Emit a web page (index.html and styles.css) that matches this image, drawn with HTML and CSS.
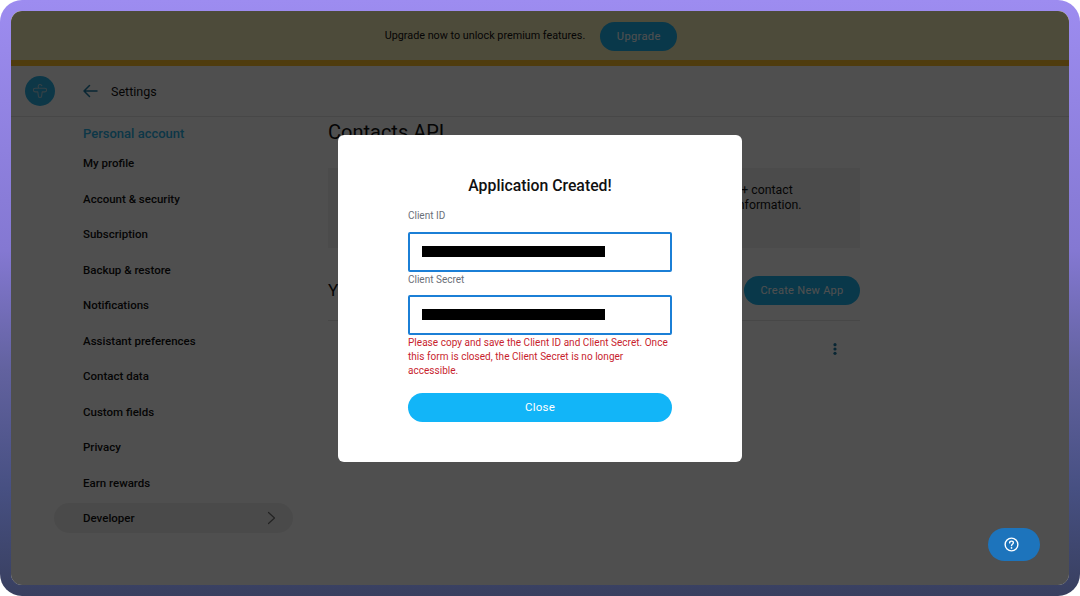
FILE: index.html
```html
<!DOCTYPE html>
<html lang="en">
<head>
<meta charset="utf-8">
<title>Settings</title>
<link rel="stylesheet" href="styles.css">
</head>
<body>
<div class="shell">
  <div class="frame">
    <div class="banner">
      <span>Upgrade now to unlock premium features.</span>
      <button class="pill banner-btn">Upgrade</button>
    </div>
    <header class="topbar">
      <div class="logo">
        <svg width="14" height="15" viewBox="0 0 14 15" fill="none" stroke="#a9cfdf" stroke-width="1.100" stroke-linejoin="round" stroke-linecap="round"><path d="M8.800 1.600C8.300.8 7.600.5 7 .5 5.900.5 5.200 1.400 5.200 2.400c0 .8.300 1.300.8 1.800M5.600 4.200H2.300C1.100 4.200.4 5 .4 6s.8 1.900 1.900 1.900h2.500l.6 4.200c.1.9.8 1.400 1.600 1.400s1.500-.5 1.600-1.400l.6-4.200h2.500c1.100 0 1.900-.9 1.900-1.900s-.7-1.800-1.900-1.800H7"/></svg>
      </div>
      <svg class="back" width="15" height="14" viewBox="0 0 15 14" fill="none" stroke="#1f7ca6" stroke-width="1.500" stroke-linecap="round" stroke-linejoin="round"><path d="M14 7H1M6.500 1.500 1 7l5.500 5.500"/></svg>
      <span class="title">Settings</span>
    </header>
    <div class="main">
      <nav class="sidebar">
        <div class="nav-head">Personal account</div>
        <a class="nav-item">My profile</a>
        <a class="nav-item">Account &amp; security</a>
        <a class="nav-item">Subscription</a>
        <a class="nav-item">Backup &amp; restore</a>
        <a class="nav-item">Notifications</a>
        <a class="nav-item">Assistant preferences</a>
        <a class="nav-item">Contact data</a>
        <a class="nav-item">Custom fields</a>
        <a class="nav-item">Privacy</a>
        <a class="nav-item">Earn rewards</a>
        <a class="nav-item active">Developer
          <svg width="9" height="14" viewBox="0 0 9 14" fill="none" stroke="#6f6f6f" stroke-width="1.200" stroke-linecap="round" stroke-linejoin="round"><path d="M1.500 1.500 7.500 7l-6 5.500"/></svg>
        </a>
      </nav>
      <section class="content">
        <h1>Contacts API</h1>
        <div class="info">
          <p>The Contacts API lets all developers access and manage their Contacts+ contact</p>
          <p>data with applications that read, create, and update all of your contact information.</p>
        </div>
        <div class="apps-head">
          <h2>Your Apps</h2>
          <button class="pill create-btn">Create New App</button>
        </div>
        <div class="app-row">
          <svg width="4" height="12" viewBox="0 0 4 12" fill="#1f7ca6"><circle cx="2" cy="1.700" r="1.600"/><circle cx="2" cy="6" r="1.600"/><circle cx="2" cy="10.300" r="1.600"/></svg>
        </div>
      </section>
    </div>
    <div class="overlay">
      <div class="modal">
        <h3>Application Created!</h3>
        <label class="field-label first">Client ID</label>
        <div class="field"><span class="redact"></span></div>
        <label class="field-label">Client Secret</label>
        <div class="field"><span class="redact"></span></div>
        <p class="warning">Please copy and save the Client ID and Client Secret. Once this form is closed, the Client Secret is no longer accessible.</p>
        <button class="pill close-btn">Close</button>
      </div>
    </div>
    <button class="help" aria-label="Help">
      <svg width="15" height="15" viewBox="0 0 16 16" fill="none" stroke="#fff" stroke-width="1.500" stroke-linecap="round"><circle cx="8" cy="8" r="6.800"/><path d="M6 6.300C6 5.100 6.900 4.400 8 4.400s2 .7 2 1.800c0 1.600-2 1.500-2 3"/><path d="M8 11.500v.1" stroke-width="1.800"/></svg>
    </button>
  </div>
</div>
</body>
</html>
```

FILE: styles.css
```css
* { box-sizing: border-box; }
html, body { margin: 0; height: 100%; }
body {
  background: #fff;
  font-family: Roboto, "Liberation Sans", sans-serif;
  overflow: hidden;
}
button { font-family: inherit; border: 0; padding: 0; }
h1, h2, h3, p { margin: 0; font-weight: 400; }

.shell {
  width: 1080px;
  height: 596px;
  padding: 11px;
  border-radius: 22px;
  background: linear-gradient(180deg, #9d8cf0 0%, #8478d2 42%, #62629f 62%, #475082 82%, #383f5f 100%);
}
.frame {
  position: relative;
  height: 574px;
  border-radius: 11px;
  overflow: hidden;
  background: #fff;
  display: flex;
  flex-direction: column;
}
.pill { border-radius: 999px; color: #fff; }

.banner {
  height: 55px;
  flex: none;
  display: flex;
  align-items: center;
  justify-content: center;
  gap: 15px;
  padding: 0 18px 0 0;
  background: #f9f0bc;
  border-bottom: 6px solid #fdc22d;
  font-size: 10.800px;
  color: #111;
}
.banner-btn {
  width: 77px;
  height: 29px;
  margin-top: 1px;
  background: #1eb4ee;
  font-size: 11.200px;
  letter-spacing: .3px;
}

.topbar {
  height: 51px;
  flex: none;
  display: flex;
  align-items: center;
  padding-left: 14px;
  border-bottom: 1px solid #e6e6e6;
}
.logo {
  width: 30px;
  height: 30px;
  border-radius: 50%;
  background: #2ab1e6;
  display: flex;
  align-items: center;
  justify-content: center;
  padding-top: 1px;
  margin-right: 28px;
}
.back { margin-right: 13px; }
.title { font-size: 12.500px; color: #111; }

.main { flex: 1; display: flex; min-height: 0; }
.sidebar {
  width: 317px;
  flex: none;
  padding: 7.500px 0 0 43px;
}
.nav-head {
  font-size: 13px;
  font-weight: 500;
  color: #2ab1e6;
  height: 18px;
  line-height: 18px;
  margin: 0 0 3px 29px;
}
.nav-item {
  display: flex;
  align-items: center;
  justify-content: space-between;
  height: 35.500px;
  width: 239px;
  padding: 0 17px 0 29px;
  font-size: 11.500px;
  font-weight: 500;
  color: #111;
}
.nav-item.active {
  height: 30px;
  margin-top: 2.500px;
  border-radius: 15px;
  background: #efefef;
}

.content { width: 532px; flex: none; }
h1 { font-size: 20px; color: #111; line-height: 24px; margin-top: 3px; }
.info {
  height: 80px;
  margin-top: 24px;
  padding: 15px 0 0 24px;
  background: #f2f2f2;
  font-size: 12.300px;
  line-height: 15px;
  color: #111;
  white-space: nowrap;
}
.apps-head {
  display: flex;
  align-items: center;
  justify-content: space-between;
  height: 29px;
  margin-top: 28px;
}
h2 { font-size: 17px; color: #111; margin-top: -2px; }
.create-btn {
  width: 116px;
  height: 29px;
  background: #1eb4ee;
  font-size: 11px;
  letter-spacing: .3px;
}
.app-row {
  height: 58px;
  margin-top: 15px;
  border-top: 1px solid #e6e6e6;
  display: flex;
  justify-content: flex-end;
  padding: 22px 23px 0 0;
}

.overlay {
  position: absolute;
  inset: 0;
  background: rgba(0, 0, 0, .69);
  display: flex;
  align-items: center;
  justify-content: center;
}
.modal {
  width: 404px;
  height: 327px;
  background: #fff;
  border-radius: 6px;
  padding: 42px 70px 0;
  display: flex;
  flex-direction: column;
}
h3 {
  font-size: 15.800px;
  font-weight: 500;
  color: #111;
  text-align: center;
  line-height: 19px;
  margin-top: -1px;
}
.field-label {
  font-size: 10px;
  color: #6b7078;
  line-height: 14px;
  margin-top: 1px;
  margin-bottom: 8px;
}
.field-label.first { margin-top: 14px; margin-bottom: 9px; }
.field {
  height: 40px;
  border: 2px solid #1b7fd6;
  border-radius: 2px;
  display: flex;
  align-items: center;
  padding-left: 12px;
}
.redact { width: 183px; height: 11px; background: #000; }
.warning {
  font-size: 10px;
  line-height: 14.400px;
  color: #c81e2e;
  margin-top: 1px;
  letter-spacing: .03px;
}
.close-btn {
  height: 29px;
  margin-top: 14px;
  flex: none;
  background: #12b5f8;
  font-size: 11.500px;
  letter-spacing: .2px;
}

.help {
  position: absolute;
  right: 29px;
  bottom: 24px;
  width: 52px;
  height: 33px;
  border-radius: 17px;
  background: #1d74bc;
  display: flex;
  align-items: center;
  justify-content: center;
  padding-right: 5px;
}
```
